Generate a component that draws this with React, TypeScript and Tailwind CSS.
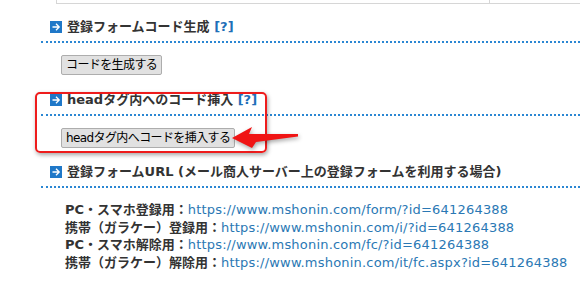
const font = { fontFamily: '"DejaVu Sans", "Noto Sans CJK JP", sans-serif' };

const HeadIcon = () => (
  <svg width="12" height="12" viewBox="0 0 12 12" className="shrink-0">
    <rect width="12" height="12" fill="#1f78c8" />
    <path d="M2.5 6h6.5M6 2.8l3.2 3.2L6 9.2" stroke="#fff" strokeWidth="1.3" fill="none" />
  </svg>
);

const SectionHead = ({ title, help = true }: { title: string; help?: boolean }) => (
  <div className="flex items-center gap-[5px] pl-[9px] pt-[4px] pb-[6px] border-b-2 border-dotted border-[#2b87d3]">
    <HeadIcon />
    <span className="text-[13px] leading-[16px] font-bold text-[#333]">
      {title}
      {help && <span className="text-[#1e6fb8]"> [?]</span>}
    </span>
  </div>
);

const WinButton = ({ label }: { label: string }) => (
  <button className="h-[20px] px-[4px] bg-[#e1e1e1] border border-[#adadad] rounded-[2px] text-[12px] leading-[18px] tracking-[-0.6px] text-black whitespace-nowrap">
    {label}
  </button>
);

const urls = [
  { label: 'PC・スマホ登録用：', url: 'https://www.mshonin.com/form/?id=641264388' },
  { label: '携帯（ガラケー）登録用：', url: 'https://www.mshonin.com/i/?id=641264388' },
  { label: 'PC・スマホ解除用：', url: 'https://www.mshonin.com/fc/?id=641264388' },
  { label: '携帯（ガラケー）解除用：', url: 'https://www.mshonin.com/it/fc.aspx?id=641264388' },
];

export default function App() {
  return (
    <div className="relative w-[580px] h-[282px] overflow-hidden bg-white" style={font}>
      {/* bottom of the code box above */}
      <div className="ml-[56px] h-[4px] border-l border-b border-[#d6d6d6] flex">
        <div className="w-[433px] border-r border-[#d6d6d6]" />
      </div>

      <div className="pl-[41px]">
        <div className="mt-[11px]">
          <SectionHead title="登録フォームコード生成" />
        </div>
        <div className="mt-[12px] pl-[20px] flex">
          <WinButton label="コードを生成する" />
        </div>

        <div className="mt-[13px]">
          <SectionHead title="headタグ内へのコード挿入" />
        </div>
        <div className="mt-[12px] pl-[20px] flex">
          <WinButton label="headタグ内へコードを挿入する" />
        </div>

        <div className="mt-[12px]">
          <SectionHead title="登録フォームURL (メール商人サーバー上の登録フォームを利用する場合)" help={false} />
        </div>
        <div className="mt-[13px] pl-[24px] text-[13px] leading-[17.6px]">
          {urls.map((u) => (
            <div key={u.url} className="whitespace-nowrap">
              <span className="font-bold text-[#333]">{u.label}</span>
              <span className="text-[#2a78b4] tracking-[0.2px]">{u.url}</span>
            </div>
          ))}
        </div>
      </div>

      {/* annotation */}
      <div className="absolute left-[35px] top-[92px] w-[232px] h-[61px] rounded-[5px] border-2 border-[#ee1c1c] shadow-[1px_2px_4px_rgba(0,0,0,0.35)]" />
      <svg
        className="absolute left-[228px] top-[122px]"
        width="75"
        height="32"
        viewBox="0 0 75 32"
        style={{ filter: 'drop-shadow(1px 2px 2px rgba(0,0,0,0.35))' }}
      >
        <polygon points="4,16 24,5 21,12 70,12 70,14.5 28,20 24,26" fill="#f01414" />
      </svg>
    </div>
  );
}
